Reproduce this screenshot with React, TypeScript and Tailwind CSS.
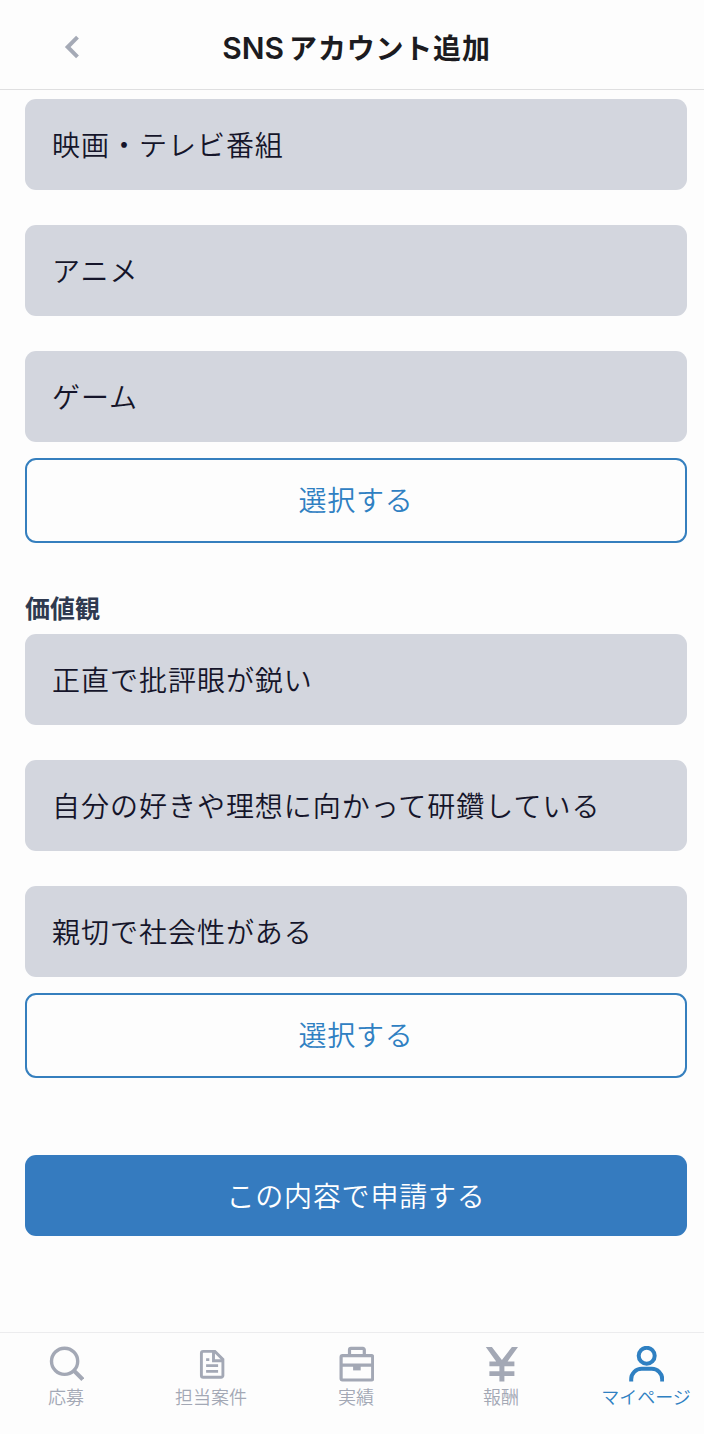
import { useState } from "react";
import type { ReactNode } from "react";

const hobbies = ["映画・テレビ番組", "アニメ", "ゲーム"];

const values = [
  "正直で批評眼が鋭い",
  "自分の好きや理想に向かって研鑽している",
  "親切で社会性がある",
];

const tabs = [
  { label: "応募", icon: <SearchIcon /> },
  { label: "担当案件", icon: <DocumentIcon /> },
  { label: "実績", icon: <BriefcaseIcon /> },
  { label: "報酬", icon: <YenIcon /> },
  { label: "マイページ", icon: <UserIcon /> },
];

export default function App() {
  const [activeTab, setActiveTab] = useState("マイページ");

  return (
    <div className="flex h-[1434px] w-[704px] flex-col overflow-hidden bg-[#fdfdfd] font-['Noto_Sans_CJK_JP',sans-serif]">

      {/* HEADER */}
      <header className="grid h-[90px] shrink-0 grid-cols-[144px_1fr_144px] items-center border-b border-[#dfdfe0]">
        <button aria-label="戻る" className="flex justify-center pt-1">
          <svg width="16" height="24" viewBox="0 0 16 24" fill="none" stroke="#a5aab6" strokeWidth="4">
            <path d="M13.5 2.2 3.7 12l9.8 9.8" />
          </svg>
        </button>
        <h1 className="flex items-baseline justify-center gap-[5px] whitespace-nowrap pl-[9px] pt-[5px] text-[28px] font-bold leading-10 text-[#1c1b20]">
          <span className="font-['Inter','Noto_Sans_CJK_JP',sans-serif] text-[30px] font-semibold">SNS</span>
          <span className="tracking-[0.8px]">アカウント追加</span>
        </h1>
      </header>

      <main className="flex grow flex-col pl-[25px] pr-[17px] pt-[9px]">
        <ChoiceList items={hobbies} />

        <h2 className="mt-[41px] flex h-[50.5px] items-start pt-[5px] text-[25px] font-bold leading-9 text-[#2f3a50]">
          価値観
        </h2>
        <ChoiceList items={values} />

        <button className="mt-[77.5px] flex h-[80.5px] shrink-0 items-center justify-center rounded-[11px] bg-[#357bbf] pb-px text-[28px] font-[350] tracking-[0.8px] text-white">
          この内容で申請する
        </button>
      </main>

      {/* TAB BAR */}
      <nav className="-mx-[6.5px] flex h-[102.5px] w-[725px] shrink-0 border-t-[1.5px] border-[#ececee] pt-[13px]">
        {tabs.map((tab) => (
          <button
            key={tab.label}
            onClick={() => setActiveTab(tab.label)}
            className={`flex w-[145px] flex-col items-center ${
              activeTab === tab.label ? "text-[#2f80c2]" : "text-[#a3a8b5]"
            }`}
          >
            {tab.icon}
            <span className="mt-px whitespace-nowrap text-[18px] font-[350] leading-[26px]">
              {tab.label}
            </span>
          </button>
        ))}
      </nav>
    </div>
  );
}

function ChoiceList({ items }: { items: string[] }) {
  return (
    <section className="flex flex-col">
      <ul className="flex flex-col gap-[35px]">
        {items.map((item) => (
          <li
            key={item}
            className="flex h-[91px] items-center rounded-[11px] bg-[#d3d6de] pb-px pl-[27px] text-[28px] font-[350] tracking-[0.98px] text-[#15152a]"
          >
            {item}
          </li>
        ))}
      </ul>
      <button className="mt-[15.5px] flex h-[85px] items-center justify-center rounded-[11px] border-2 border-[#357fbe] pb-0.5 text-[28px] font-[350] tracking-[0.8px] text-[#2f80c2]">
        選択する
      </button>
    </section>
  );
}

/* TAB ICONS */
function TabIcon({ children }: { children: ReactNode }) {
  return (
    <svg width="36" height="36" viewBox="0 0 36 36" fill="none" stroke="currentColor" strokeWidth="3.2">
      {children}
    </svg>
  );
}

function SearchIcon() {
  return (
    <TabIcon>
      <circle cx="16.6" cy="15.3" r="13.1" strokeWidth="3.4" />
      <path d="m25.8 24.5 9 9" strokeWidth="4" />
    </TabIcon>
  );
}

function DocumentIcon() {
  return (
    <TabIcon>
      <path d="M10.2 5.4h11.7l8 8v16.1a1.8 1.8 0 0 1-1.8 1.8H10.2a1.8 1.8 0 0 1-1.8-1.8V7.2a1.8 1.8 0 0 1 1.8-1.8Z" strokeWidth="2.9" />
      <path d="M20.5 5.4v9.4h9.4" strokeWidth="2.9" />
      <path d="M13.1 13.7h3.2M13.1 19.6h12M13.1 25.4h12" strokeWidth="2.7" />
    </TabIcon>
  );
}

function BriefcaseIcon() {
  return (
    <TabIcon>
      <rect x="3.1" y="9.6" width="31.6" height="24.4" rx="1.4" />
      <path d="M11.5 9.5V3.8a1.4 1.4 0 0 1 1.4-1.4h12a1.4 1.4 0 0 1 1.4 1.4v5.7M3.1 19.2h31.6" />
      <path d="M15.1 19.2h7.6v5.2h-7.6z" fill="currentColor" stroke="none" />
    </TabIcon>
  );
}

function YenIcon() {
  return (
    <TabIcon>
      <path d="M2.8 1h6.1l10 13 10-13H35L24.6 15.4h6.8v4.9h-10v4.9h10v4.9h-10v5.4h-5v-5.4h-10v-4.9h10v-4.9h-10v-4.9h6.8Z" fill="currentColor" stroke="none" />
    </TabIcon>
  );
}

function UserIcon() {
  return (
    <TabIcon>
      <circle cx="18.7" cy="9.8" r="8" strokeWidth="4" />
      <path d="M3.2 35.6v-2.4a10.4 10.4 0 0 1 10.4-10.4h10.2a10.4 10.4 0 0 1 10.4 10.4v2.4" strokeWidth="4" />
    </TabIcon>
  );
}
